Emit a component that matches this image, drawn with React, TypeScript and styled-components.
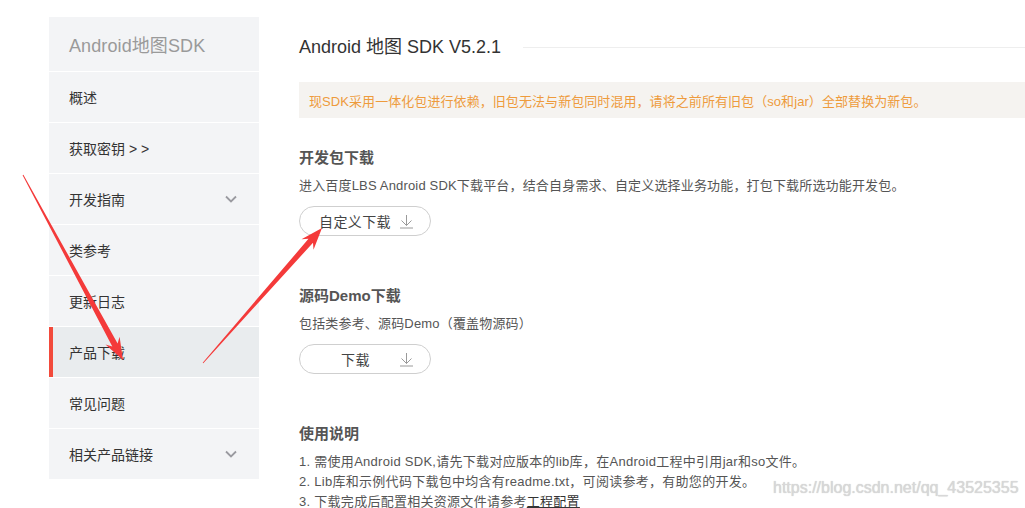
import React from "react";
import styled, { createGlobalStyle } from "styled-components";

const Global = createGlobalStyle`
  html, body { margin: 0; padding: 0; background: #fff; overflow: hidden; }
  body { font-family: "Liberation Sans", "Noto Sans CJK SC", sans-serif; color: #555; }
  * { box-sizing: border-box; }
`;

const Page = styled.div`
  position: relative;
  width: 1025px;
  height: 508px;
  overflow: hidden;
  display: flex;
  align-items: flex-start;
  gap: 40px;
  padding: 17px 0 0 49px;
`;

const Sidebar = styled.nav`
  flex: 0 0 210px;
  display: flex;
  flex-direction: column;
  gap: 1px;
  background: #fff;
`;

const SideHeader = styled.div`
  height: 54px;
  display: flex;
  align-items: center;
  padding-left: 20px;
  background: #f3f4f6;
  color: #9a9a9a;
  font-size: 18px;
  letter-spacing: 0.1px;
`;

const SideItem = styled.div<{ $active?: boolean }>`
  position: relative;
  height: 50px;
  display: flex;
  align-items: center;
  justify-content: space-between;
  padding: 0 22px 0 20px;
  background: ${(p) => (p.$active ? "#e9ecee" : "#f3f4f6")};
  color: #333;
  font-size: 14px;
  border-left: ${(p) => (p.$active ? "4px solid #f24a3b" : "none")};
  padding-left: ${(p) => (p.$active ? "16px" : "20px")};
  white-space: pre;
`;

const Main = styled.main`
  flex: 1;
  min-width: 760px;
  display: flex;
  flex-direction: column;
`;

const TitleRow = styled.div`
  margin-top: 18px;
  display: flex;
  align-items: center;
  gap: 22px;
`;

const Title = styled.h1`
  margin: 0;
  font-size: 18px;
  font-weight: normal;
  line-height: 24px;
  color: #333;
  white-space: nowrap;
`;

const Rule = styled.div`
  flex: 1;
  height: 1px;
  background: #eeeeee;
`;

const Notice = styled.div`
  margin-top: 23px;
  height: 36px;
  display: flex;
  align-items: center;
  padding-left: 10px;
  background: #f5f3f0;
  color: #ee9b3c;
  font-size: 13px;
  letter-spacing: 0.07px;
  white-space: nowrap;
`;

const Section = styled.section<{ $top: number }>`
  margin-top: ${(p) => p.$top}px;
  display: flex;
  flex-direction: column;
`;

const SectionTitle = styled.h2`
  margin: 0;
  font-size: 15px;
  font-weight: bold;
  line-height: 20px;
  color: #555;
`;

const Desc = styled.p`
  margin: 8px 0 0;
  font-size: 13px;
  line-height: 20px;
  color: #555;
  letter-spacing: 0.17px;
  white-space: nowrap;
`;

const PillButton = styled.button<{ $center?: boolean }>`
  margin-top: 10px;
  width: 132px;
  height: 30px;
  border: 1px solid #cfcfcf;
  border-radius: 15px;
  background: #fff;
  display: flex;
  align-items: center;
  padding: 0 14px 0 ${(p) => (p.$center ? "41px" : "19px")};
  gap: ${(p) => (p.$center ? "29px" : "8px")};
  font-family: inherit;
  font-size: 14px;
  letter-spacing: 0.4px;
  white-space: nowrap;
  color: #444;
  cursor: pointer;
  & > * { flex-shrink: 0; }
`;

const List = styled.ol`
  margin: 8px 0 0;
  padding: 0;
  list-style: none;
  font-size: 13px;
  line-height: 20px;
  color: #555;
  letter-spacing: 0.28px;
  white-space: nowrap;
`;

const Link = styled.a`
  color: #333;
  text-decoration: underline;
`;

const Watermark = styled.div`
  position: absolute;
  left: 773px;
  top: 479px;
  font-family: "Liberation Sans", sans-serif;
  font-size: 16px;
  color: #d8d8d8;
  text-shadow: 0 0 1px #c4c4c4;
  white-space: nowrap;
  pointer-events: none;
`;

const Overlay = styled.svg`
  position: absolute;
  left: 0;
  top: 0;
  pointer-events: none;
`;

const Chevron = () => (
  <svg width="12" height="8" viewBox="0 0 12 8">
    <polyline points="1,1.5 6,6.5 11,1.5" fill="none" stroke="#9a9aa0" strokeWidth="1.8" />
  </svg>
);

const DownloadIcon = () => (
  <svg width="15" height="15" viewBox="0 0 15 15">
    <g fill="none" stroke="#9a9a9a" strokeWidth="1">
      <line x1="7.5" y1="1" x2="7.5" y2="11.5" />
      <polyline points="2.5,6.5 7.5,11.5 12.5,6.5" />
      <line x1="1" y1="14" x2="14" y2="14" />
    </g>
  </svg>
);

function arrowPoints(x1: number, y1: number, x2: number, y2: number) {
  const dx = x2 - x1;
  const dy = y2 - y1;
  const len = Math.hypot(dx, dy);
  const ux = dx / len;
  const uy = dy / len;
  const nx = -uy;
  const ny = ux;
  const headLen = 22;
  const headW = 8;
  const shaftEnd = 3;
  const bx = x2 - ux * headLen;
  const by = y2 - uy * headLen;
  const nx2 = x2 - ux * (headLen - 5);
  const ny2 = y2 - uy * (headLen - 5);
  const pts = [
    [x1 + nx * 0.4, y1 + ny * 0.4],
    [nx2 + nx * shaftEnd, ny2 + ny * shaftEnd],
    [bx + nx * headW, by + ny * headW],
    [x2, y2],
    [bx - nx * headW, by - ny * headW],
    [nx2 - nx * shaftEnd, ny2 - ny * shaftEnd],
    [x1 - nx * 0.4, y1 - ny * 0.4],
  ];
  return pts.map((p) => `${p[0].toFixed(1)},${p[1].toFixed(1)}`).join(" ");
}

const menu = [
  { label: "概述" },
  { label: "获取密钥 > >" },
  { label: "开发指南", chevron: true },
  { label: "类参考" },
  { label: "更新日志" },
  { label: "产品下载", active: true },
  { label: "常见问题" },
  { label: "相关产品链接", chevron: true },
];

export default function App() {
  return (
    <>
      <Global />
      <Page>
        <Sidebar>
          <SideHeader>Android地图SDK</SideHeader>
          {menu.map((m) => (
            <SideItem key={m.label} $active={m.active}>
              <span>{m.label}</span>
              {m.chevron && <Chevron />}
            </SideItem>
          ))}
        </Sidebar>
        <Main>
          <TitleRow>
            <Title>Android 地图 SDK V5.2.1</Title>
            <Rule />
          </TitleRow>
          <Notice>
            现SDK采用一体化包进行依赖，旧包无法与新包同时混用，请将之前所有旧包（so和jar）全部替换为新包。
          </Notice>
          <Section $top={30}>
            <SectionTitle>开发包下载</SectionTitle>
            <Desc>进入百度LBS Android SDK下载平台，结合自身需求、自定义选择业务功能，打包下载所选功能开发包。</Desc>
            <PillButton>
              <span>自定义下载</span>
              <DownloadIcon />
            </PillButton>
          </Section>
          <Section $top={50}>
            <SectionTitle>源码Demo下载</SectionTitle>
            <Desc>包括类参考、源码Demo（覆盖物源码）</Desc>
            <PillButton $center>
              <span>下载</span>
              <DownloadIcon />
            </PillButton>
          </Section>
          <Section $top={50}>
            <SectionTitle>使用说明</SectionTitle>
            <List>
              <li>1. 需使用Android SDK,请先下载对应版本的lib库，在Android工程中引用jar和so文件。</li>
              <li>2. Lib库和示例代码下载包中均含有readme.txt，可阅读参考，有助您的开发。</li>
              <li>
                3. 下载完成后配置相关资源文件请参考<Link>工程配置</Link>
              </li>
            </List>
          </Section>
        </Main>
        <Watermark>https://blog.csdn.net/qq_43525355</Watermark>
        <Overlay width="1025" height="508" viewBox="0 0 1025 508">
          <polygon points={arrowPoints(23, 175, 123, 360)} fill="#f43a3a" />
          <polygon points={arrowPoints(203, 363, 322, 228)} fill="#f43a3a" />
        </Overlay>
      </Page>
    </>
  );
}
